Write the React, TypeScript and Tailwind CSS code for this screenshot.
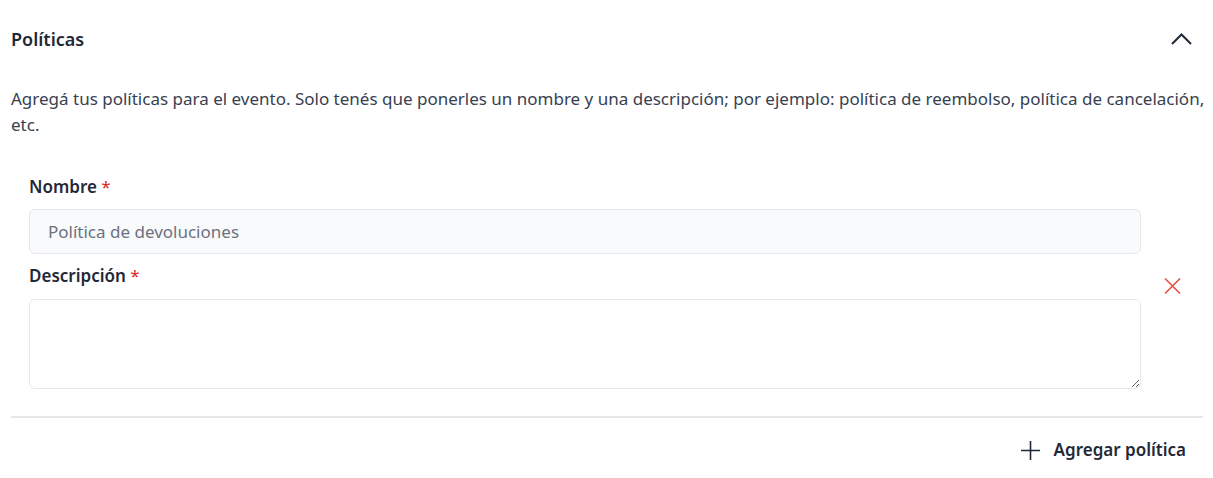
import React from 'react';

const font = { fontFamily: '"Noto Sans", "Open Sans", sans-serif' };

// Campo obligatorio con asterisco rojo
const Label = ({ children }: { children: React.ReactNode }) => (
  <label className="block text-[17px] leading-6 font-semibold text-[#1f2937]">
    {children} <span className="text-[#dc2626] font-normal">*</span>
  </label>
);

export default function App() {
  return (
    <div className="w-[1213px] h-[478px] bg-white pl-[11px] pr-[10px]" style={font}>
      <div className="h-[78px] flex items-center justify-between">
        <h2 className="text-[18px] font-semibold text-[#1f2937]">Políticas</h2>
        <button className="mr-[11px] text-[#1f2937]" aria-label="Contraer">
          <svg width="21" height="12" viewBox="0 0 21 12" fill="none">
            <path d="M1 11 10.5 1.5 20 11" stroke="currentColor" strokeWidth="2" />
          </svg>
        </button>
      </div>

      <p className="mt-2 -mr-[8px] text-[17px] leading-[26px] text-[#374151]">
        Agregá tus políticas para el evento. Solo tenés que ponerles un nombre y una descripción; por ejemplo: política de reembolso, política de cancelación, etc.
      </p>

      <div className="pt-[37px] pl-[18px] flex items-start">
        <div className="flex-1">
          <Label>Nombre</Label>
          <input
            className="mt-[10px] w-full h-[45px] rounded-md border border-[#e5e7eb] bg-[#f9fafb] px-[18px] text-[17px] text-[#1f2937] placeholder:text-[#6b7280] outline-none"
            placeholder="Política de devoluciones"
          />
          <div className="mt-[10px]">
            <Label>Descripción</Label>
          </div>
          <textarea className="mt-[11px] block w-full h-[90px] rounded-md border border-[#e5e7eb] bg-white px-[18px] py-2 text-[17px] outline-none" />
        </div>
        <div className="w-[62px] flex justify-center pt-[103px]">
          <button className="text-[#e05547]" aria-label="Eliminar">
            <svg width="17" height="16" viewBox="0 0 17 16" fill="none">
              <path d="M1 0.5 16 15.5M16 0.5 1 15.5" stroke="currentColor" strokeWidth="1.6" />
            </svg>
          </button>
        </div>
      </div>

      <div className="mt-[27px] h-[2px] bg-[#e5e7eb]" />

      <div className="flex justify-end pr-[17px] pt-[12px]">
        <button className="h-[40px] flex items-center gap-[14px] text-[17px] font-semibold text-[#1f2937]">
          <svg width="19" height="19" viewBox="0 0 19 19" fill="none">
            <path d="M9.5 0v19M0 9.5h19" stroke="currentColor" strokeWidth="1.6" />
          </svg>
          Agregar política
        </button>
      </div>
    </div>
  );
}
